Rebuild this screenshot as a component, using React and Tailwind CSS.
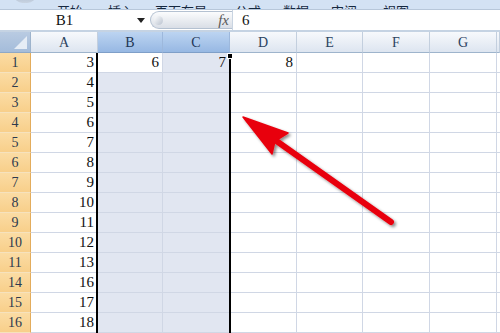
const tabs = [
  { label: "开始", ml: "ml-[57px]" },
  { label: "插入", ml: "ml-[25px]" },
  { label: "页面布局", ml: "ml-[21px]" },
  { label: "公式", ml: "ml-[28px]" },
  { label: "数据", ml: "ml-[22px]" },
  { label: "审阅", ml: "ml-[22px]" },
  { label: "视图", ml: "ml-[26px]" },
];

const cols = ["A", "B", "C", "D", "E", "F", "G", ""];

const rows = [
  [1, 3], [2, 4], [3, 5], [4, 6], [5, 7], [6, 8], [7, 9], [8, 10],
  [9, 11], [10, 12], [11, 13], [14, 16], [15, 17], [16, 18],
];

const serif = { fontFamily: '"Liberation Serif", "DejaVu Serif", serif' };

function HeaderCell({ label, selected }) {
  return (
    <div
      className={
        "flex items-center justify-center border-r border-b text-[14px] " +
        (selected
          ? "bg-gradient-to-b from-[#bcd4f1] to-[#97b8e3] border-r-[#9db8dc] border-b-[#7f9fc8] text-[#1d3555]"
          : "bg-gradient-to-b from-[#f7f9fc] to-[#dde5f0] border-r-[#c3cfde] border-b-[#9eb4cc] text-[#2b4260]")
      }
    >
      {label}
    </div>
  );
}

function Cell({ value, selected, active }) {
  return (
    <div
      className={
        "border-r border-b border-[#d0d7e5] pr-[3px] text-right text-[15px] leading-[19px] text-[#111] " +
        (selected && !active ? "bg-[#e1e6f1]" : "bg-white")
      }
    >
      {value}
    </div>
  );
}

export default function App() {
  return (
    <div className="relative h-[333px] w-[500px] overflow-hidden bg-white" style={serif}>
      {/* ribbon tab strip, mostly cut off */}
      <div className="relative flex h-[9px] items-end overflow-hidden bg-[#d3e2f4]">
        <div className="absolute left-[14px] top-[-14px] h-[17px] w-[22px] rounded-full bg-gradient-to-b from-[#8fa2ba] to-[#c9d4e2]" />
        <div
          className="flex -mb-[8px] text-[13px] leading-[13px] text-[#15283f]"
          style={{ fontFamily: '"Noto Sans CJK SC", sans-serif' }}
        >
          {tabs.map((t) => (
            <span key={t.label} className={t.ml}>
              {t.label}
            </span>
          ))}
        </div>
      </div>

      {/* formula bar */}
      <div className="flex h-[23px] border-t border-b-2 border-t-[#b7c7da] border-b-[#c5d3e3] bg-white">
        <div className="relative flex w-[147px] items-center justify-center text-[15px] text-[#111]">
          <span className="-ml-[18px]">B1</span>
          <span className="absolute right-[2px] top-[8px] h-0 w-0 border-x-[4px] border-t-[5px] border-x-transparent border-t-[#222]" />
        </div>
        <div className="my-[1px] ml-[3px] flex w-[82px] items-center justify-end rounded-l-full border border-r-0 border-[#b4c1d1] bg-gradient-to-b from-[#fbfcfd] to-[#d9dee6] pr-[3px]">
          <span className="mr-auto ml-[3px] h-[9px] w-[9px] rounded-full bg-gradient-to-br from-[#ffffff] to-[#b9c2cf]" />
          <span className="text-[15px] italic text-[#5a5a5a]">fx</span>
        </div>
        <div className="flex flex-1 items-center border-l border-[#c9d4e1] pl-[9px] text-[15px] text-[#111]">
          6
        </div>
      </div>

      {/* sheet */}
      <div className="grid grid-cols-[31px_67px_65px_67px_67px_66px_67px_67px_1fr] grid-rows-[21px]">
        <div className="relative border-r border-b border-r-[#9db3cc] border-b-[#8ea8c6] bg-gradient-to-b from-[#b9cbe2] to-[#a4bcda]">
          <span className="absolute bottom-[3px] right-[3px] h-0 w-0" style={{ borderBottom: "13px solid #e6edf6", borderLeft: "13px solid transparent" }} />
        </div>
        {cols.map((c) => (
          <HeaderCell key={c || "x"} label={c} selected={c === "B" || c === "C"} />
        ))}
      </div>

      <div className="relative">
        <div className="grid grid-cols-[31px_67px_65px_67px_67px_66px_67px_67px_1fr] auto-rows-[20px]">
          {rows.map(([n, v], i) => (
            <div key={n} className="contents">
              <div className="flex items-center justify-center border-r border-b border-r-[#e3ac5c] border-b-[#f6e2bd] bg-gradient-to-b from-[#fbdca4] to-[#f8cf8a] text-[14px] text-[#2d3a4e]">
                {n}
              </div>
              <Cell value={v} />
              <Cell value={i === 0 ? 6 : ""} selected active={i === 0} />
              <Cell value={i === 0 ? 7 : ""} selected />
              <Cell value={i === 0 ? 8 : ""} />
              <Cell value="" />
              <Cell value="" />
              <Cell value="" />
              <Cell value="" />
            </div>
          ))}
        </div>

        {/* selection outline over columns B:C */}
        <div className="pointer-events-none absolute left-[96px] top-0 bottom-0 w-[135px] border-x-2 border-black">
          <span className="absolute -right-[4px] top-0 h-[6px] w-[6px] border border-white bg-black" />
        </div>
      </div>

      {/* red arrow annotation */}
      <svg className="pointer-events-none absolute inset-0" width="500" height="333" viewBox="0 0 500 333">
        <defs>
          <filter id="sh" x="-20%" y="-20%" width="140%" height="140%">
            <feDropShadow dx="2" dy="2" stdDeviation="1.8" floodColor="#000" floodOpacity="0.45" />
          </filter>
        </defs>
        <g filter="url(#sh)" fill="#e8000f" stroke="#e8000f">
          <line x1="391" y1="222" x2="268" y2="135" strokeWidth="6" strokeLinecap="round" />
          <polygon points="243,117 288,133 275,141 272,154" strokeWidth="1.5" strokeLinejoin="round" />
        </g>
      </svg>
    </div>
  );
}
